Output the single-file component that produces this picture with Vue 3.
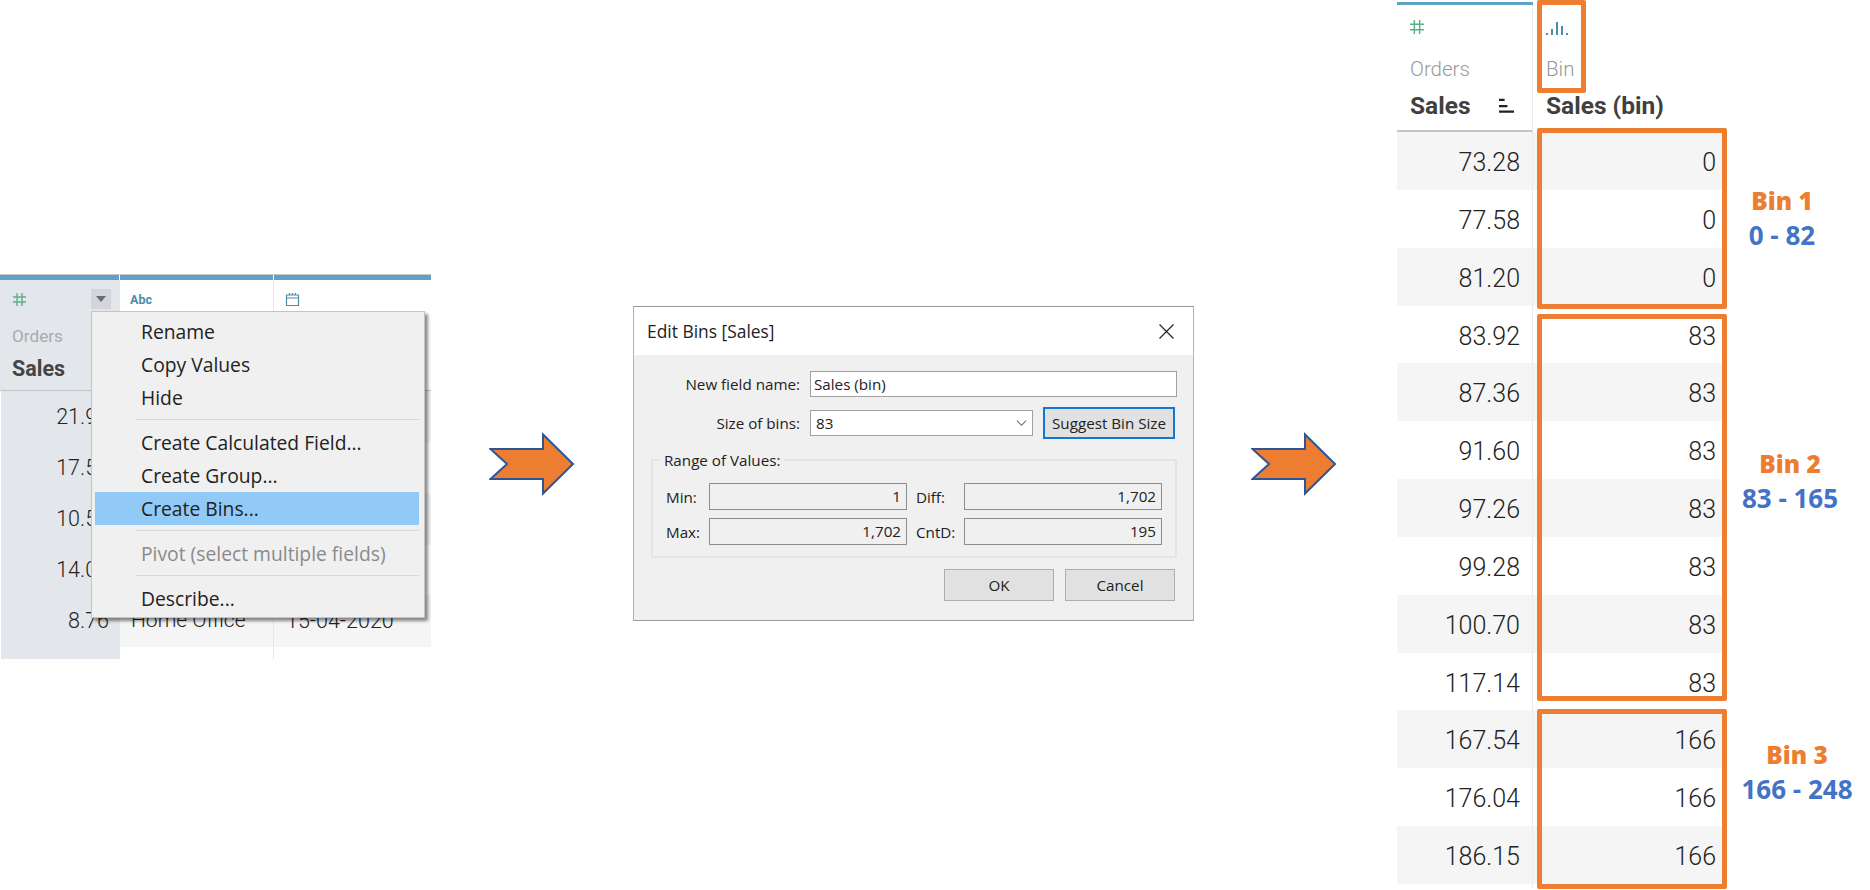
<template>
  <div class="page">
    <!-- step 1: field menu over the data grid -->
    <section class="left">
      <div class="lt-bar">
        <i></i><i></i><i></i>
      </div>
      <div class="lt-head">
        <div class="lt-h lt-h1">
          <div class="lt-icons">
            <svg class="hash" viewBox="0 0 15 15"><path d="M5 1v13M10 1v13M1 5h13M1 10h13" /></svg>
            <span class="drop"><b></b></span>
          </div>
          <div class="src">Orders</div>
          <div class="name">Sales</div>
        </div>
        <div class="lt-h">
          <div class="lt-icons"><span class="abc">Abc</span></div>
        </div>
        <div class="lt-h lt-h3">
          <div class="lt-icons">
            <svg class="cal" viewBox="0 0 15 15"><path d="M1.5 3h12v10.5h-12zM1.5 6h12M4.5 1v2.5M7.5 1v2.5M10.5 1v2.5" /></svg>
          </div>
        </div>
      </div>
      <div v-for="(row, i) in leftRows" :key="i" class="lt-row" :class="{ odd: i % 2 === 0 }">
        <div class="lt-c1">{{ row.sales }}</div>
        <div class="lt-c2">{{ row.segment }}</div>
        <div class="lt-c3">{{ row.date }}</div>
      </div>
      <div class="lt-row lt-tail">
        <div class="lt-c1"></div>
        <div class="lt-c2"></div>
        <div class="lt-c3"></div>
      </div>

      <div class="menu">
        <template v-for="(item, i) in menuItems" :key="i">
          <div v-if="item.sep" class="menu-sep"></div>
          <div v-else class="menu-item" :class="{ active: item.active, off: item.off }">{{ item.text }}</div>
        </template>
      </div>
    </section>

    <svg class="arrow arrow1" viewBox="0 0 86 64">
      <path d="M1.5 17H54V2.5L84 32 54 61.5V47H1.5L18 32z" />
    </svg>

    <!-- step 2: edit bins dialog -->
    <section class="dialog">
      <div class="dlg-title">
        <span>Edit Bins [Sales]</span>
        <svg class="close" viewBox="0 0 14 14"><path d="M0.5 0.5l13 13M13.5 0.5l-13 13" /></svg>
      </div>
      <div class="dlg-body">
        <div class="f-row">
          <label>New field name:</label>
          <div class="inp name-inp">Sales (bin)</div>
        </div>
        <div class="f-row f-row2">
          <label>Size of bins:</label>
          <div class="inp size-inp">
            <span>83</span>
            <svg viewBox="0 0 12 8"><path d="M1 1.5l5 5 5-5" /></svg>
          </div>
          <div class="suggest">Suggest Bin Size</div>
        </div>
        <div class="range">
          <span class="legend">Range of Values:</span>
          <div class="range-grid">
            <label>Min:</label><div class="ro">1</div>
            <label class="lab2">Diff:</label><div class="ro">1,702</div>
            <label>Max:</label><div class="ro">1,702</div>
            <label class="lab2">CntD:</label><div class="ro">195</div>
          </div>
        </div>
        <div class="btns">
          <div class="btn">OK</div>
          <div class="btn">Cancel</div>
        </div>
      </div>
    </section>

    <svg class="arrow arrow2" viewBox="0 0 86 64">
      <path d="M1.5 17H54V2.5L84 32 54 61.5V47H1.5L18 32z" />
    </svg>

    <!-- step 3: result table with the bins marked -->
    <section class="right">
      <div class="rt-bar"></div>
      <div class="rt-head">
        <div class="rh rh1">
          <svg class="hash rt-hash" viewBox="0 0 15 15"><path d="M5 1v13M10 1v13M1 5h13M1 10h13" /></svg>
          <div class="rt-src">Orders</div>
          <div class="rt-name">
            <span>Sales</span>
            <svg class="sort" viewBox="0 0 16 16"><path d="M0 1.5h6M0 8h9M0 14h16" /></svg>
          </div>
        </div>
        <div class="rh rh2">
          <svg class="hist" viewBox="0 0 22 15"><path d="M1 13v2M6 9v6M11 2v13M16 6v9M21 13v2" /></svg>
          <div class="rt-src">Bin</div>
          <div class="rt-name"><span>Sales (bin)</span></div>
        </div>
      </div>
      <div v-for="(row, i) in rightRows" :key="i" class="rt-row" :class="{ odd: i % 2 === 0 }">
        <div class="rt-c1">{{ row[0] }}</div>
        <div class="rt-c2">{{ row[1] }}</div>
      </div>

      <div class="mark mark-head"></div>
      <div class="mark mark-1"></div>
      <div class="mark mark-2"></div>
      <div class="mark mark-3"></div>

      <div class="bin bin-1"><b>Bin 1</b><em>0 - 82</em></div>
      <div class="bin bin-2"><b>Bin 2</b><em>83 - 165</em></div>
      <div class="bin bin-3"><b>Bin 3</b><em>166 - 248</em></div>
    </section>
  </div>
</template>

<script setup>
const leftRows = [
  { sales: '21.92', segment: '', date: '' },
  { sales: '17.52', segment: '', date: '' },
  { sales: '10.56', segment: '', date: '' },
  { sales: '14.02', segment: '', date: '' },
  { sales: '8.76', segment: 'Home Office', date: '15-04-2020' },
]

const menuItems = [
  { text: 'Rename' },
  { text: 'Copy Values' },
  { text: 'Hide' },
  { sep: true },
  { text: 'Create Calculated Field...' },
  { text: 'Create Group...' },
  { text: 'Create Bins...', active: true },
  { sep: true },
  { text: 'Pivot (select multiple fields)', off: true },
  { sep: true },
  { text: 'Describe...' },
]

const rightRows = [
  ['73.28', 0],
  ['77.58', 0],
  ['81.20', 0],
  ['83.92', 83],
  ['87.36', 83],
  ['91.60', 83],
  ['97.26', 83],
  ['99.28', 83],
  ['100.70', 83],
  ['117.14', 83],
  ['167.54', 166],
  ['176.04', 166],
  ['186.15', 166],
]
</script>

<style>
html,
body {
  margin: 0;
  background: #fff;
}
</style>

<style scoped>
.page {
  display: flex;
  align-items: flex-start;
  width: 1870px;
  height: 890px;
  overflow: hidden;
  background: #fff;
  font-family: Roboto, sans-serif;
  color: #333;
}

/* ---- left grid ---- */
.left {
  position: relative;
  flex: none;
  width: 431px;
  margin-top: 274px;
}
.lt-bar {
  display: grid;
  grid-template-columns: 119px 153px 157px;
  column-gap: 1px;
  height: 5px;
  border-top: 1px solid #c8c8c8;
}
.lt-bar i {
  background: #5fa2c5;
}
.lt-head {
  display: grid;
  grid-template-columns: 120px 154px 157px;
  height: 110px;
  border-bottom: 1px solid #c4c4c4;
  box-sizing: content-box;
}
.lt-h {
  border-right: 1px solid #e6e6e6;
  box-sizing: border-box;
}
.lt-h3 {
  border-right: 0;
}
.lt-h1 {
  background: #e3e7eb;
  padding-left: 12px;
  border-right: 0;
}
.lt-icons {
  display: flex;
  align-items: center;
  justify-content: space-between;
  height: 30px;
  margin-top: 4px;
  padding-right: 9px;
}
.hash {
  width: 15px;
  height: 15px;
  fill: none;
  stroke: #5bb08c;
  stroke-width: 1.4;
}
.drop {
  display: flex;
  align-items: center;
  justify-content: center;
  width: 20px;
  height: 20px;
  background: #d3d5d8;
}
.drop b {
  width: 0;
  height: 0;
  border-left: 5px solid transparent;
  border-right: 5px solid transparent;
  border-top: 6px solid #5f6e80;
}
.abc {
  margin-left: 10px;
  font-size: 12.5px;
  font-weight: 700;
  color: #4a8cab;
}
.cal {
  width: 15px;
  height: 15px;
  margin-left: 11px;
  fill: none;
  stroke: #4a8cab;
  stroke-width: 1.2;
}
.src {
  margin-top: 12px;
  font-size: 17.2px;
  line-height: 20px;
  color: #aaa;
}
.name {
  margin-top: 11px;
  font-size: 21.5px;
  line-height: 24px;
  font-weight: 700;
  color: #444;
}
.lt-row {
  display: grid;
  grid-template-columns: 120px 154px 157px;
  height: 51px;
  box-sizing: border-box;
  font-size: 21.5px;
  font-weight: 300;
  line-height: 51px;
  color: #222;
}
.lt-c1 {
  background: #e3e7eb;
  border-left: 1px solid #fff;
  border-bottom: 1px solid #eef0f2;
  padding-right: 11px;
  text-align: right;
}
.lt-c2 {
  padding-left: 11px;
  font-size: 21px;
  border-right: 1px solid #e6e6e6;
}
.lt-c3 {
  padding-left: 12px;
}
.lt-row.odd .lt-c2,
.lt-row.odd .lt-c3 {
  background: #f5f5f5;
}
.lt-tail {
  height: 13px;
}
.lt-tail .lt-c1 {
  border-bottom: 0;
}

.menu {
  position: absolute;
  left: 91px;
  top: 37px;
  width: 334px;
  height: 307px;
  box-sizing: border-box;
  padding: 3px 5px 4px 3px;
  background: #f0f0f0;
  border: 1px solid #c4c4c4;
  box-shadow: 3px 3px 3px rgba(0, 0, 0, 0.45);
  font-family: 'Open Sans', sans-serif;
  font-size: 19.3px;
  color: #222;
}
.menu-item {
  height: 33px;
  line-height: 33px;
  padding-left: 46px;
  white-space: nowrap;
}
.menu-item.active {
  background: #91c9f7;
}
.menu-item.off {
  color: #8a8a8a;
}
.menu-sep {
  height: 1px;
  margin: 5px 0 6px 41px;
  background: #d8d8d8;
}

.arrow {
  flex: none;
  width: 86px;
  height: 64px;
  margin-top: 432px;
}
.arrow path {
  fill: #ed7d31;
  stroke: #2f5597;
  stroke-width: 2;
}
.arrow1 {
  margin-left: 58px;
}
.arrow2 {
  margin-left: 57px;
}

/* ---- dialog ---- */
.dialog {
  flex: none;
  width: 561px;
  height: 315px;
  margin-top: 306px;
  margin-left: 58px;
  box-sizing: border-box;
  background: #f0f0f0;
  border: 1px solid #b4b4b4;
  border-top-color: #9a9a9a;
  border-bottom-color: #9a9a9a;
  font-family: 'Open Sans', sans-serif;
  font-size: 15.2px;
  color: #222;
}
.dlg-title {
  display: flex;
  align-items: center;
  justify-content: space-between;
  height: 48px;
  padding: 0 19px 0 13px;
  background: #fff;
  font-size: 17.4px;
}
.close {
  width: 15px;
  height: 15px;
  fill: none;
  stroke: #222;
  stroke-width: 1.1;
}
.dlg-body {
  padding-top: 16px;
}
.f-row {
  display: flex;
  align-items: center;
  height: 26px;
}
.f-row label {
  width: 166px;
  margin-right: 10px;
  text-align: right;
}
.f-row2 {
  margin-top: 13px;
}
.inp {
  box-sizing: border-box;
  height: 26px;
  line-height: 24px;
  padding-left: 3px;
  background: #fff;
  border: 1px solid #a0a0a0;
}
.name-inp {
  width: 367px;
}
.size-inp {
  display: flex;
  align-items: center;
  justify-content: space-between;
  width: 223px;
  padding: 0 5px 0 5px;
}
.size-inp svg {
  width: 11px;
  height: 8px;
  fill: none;
  stroke: #666;
  stroke-width: 1.1;
}
.suggest {
  box-sizing: border-box;
  width: 132px;
  height: 32px;
  margin-left: 10px;
  line-height: 28px;
  text-align: center;
  background: #e1e1e1;
  border: 2px solid #0f78d4;
  white-space: nowrap;
}
.range {
  position: relative;
  box-sizing: border-box;
  width: 526px;
  height: 99px;
  margin: 23px 0 0 17px;
  padding: 22px 0 0 13px;
  border: 2px solid #e4e4e4;
}
.legend {
  position: absolute;
  left: 7px;
  top: -10px;
  padding: 0 4px;
  line-height: 18px;
  background: #f0f0f0;
}
.range-grid {
  display: grid;
  grid-template-columns: 43px 198px 57px 198px;
  grid-auto-rows: 27px;
  row-gap: 8px;
  align-items: center;
}
.lab2 {
  padding-left: 9px;
}
.ro {
  box-sizing: border-box;
  height: 27px;
  line-height: 25px;
  padding-right: 5px;
  text-align: right;
  border: 1px solid #8e8e8e;
}
.btns {
  display: flex;
  justify-content: flex-end;
  gap: 11px;
  margin-top: 11px;
  padding-right: 18px;
}
.btn {
  box-sizing: border-box;
  width: 110px;
  height: 32px;
  line-height: 30px;
  text-align: center;
  background: #e1e1e1;
  border: 1px solid #adadad;
}

/* ---- right table ---- */
.right {
  position: relative;
  flex: none;
  width: 473px;
  height: 890px;
  margin-left: 60px;
}
.rt-bar {
  width: 136px;
  height: 3px;
  margin-top: 2px;
  background: #5fa2c5;
}
.rt-head {
  display: grid;
  grid-template-columns: 136px 191px;
  width: 327px;
  height: 127px;
}
.rh {
  box-sizing: border-box;
  padding-left: 13px;
}
.rh1 {
  border-right: 1px solid #ececec;
  border-bottom: 2px solid #c4c4c4;
}
.rt-hash {
  display: block;
  width: 16px;
  height: 16px;
  margin: 14px 0 0 -1px;
}
.rh2 {
  padding-left: 13px;
}
.hist {
  display: block;
  width: 22px;
  height: 15px;
  margin: 15px 0 0 0;
  fill: none;
  stroke: #4a8cab;
  stroke-width: 2;
}
.rt-src {
  margin-top: 22px;
  font-size: 20.5px;
  font-weight: 300;
  line-height: 24px;
  color: #999;
}
.rt-name {
  display: flex;
  align-items: center;
  justify-content: space-between;
  margin-top: 11px;
  padding-right: 18px;
  font-size: 24.5px;
  line-height: 28px;
  font-weight: 700;
  color: #404040;
}
.sort {
  width: 15px;
  height: 16px;
  fill: none;
  stroke: #222;
  stroke-width: 2.4;
}
.rt-row {
  display: grid;
  grid-template-columns: 136px 191px;
  width: 327px;
  height: 57.85px;
  font-size: 25px;
  font-weight: 300;
  line-height: 62px;
  text-align: right;
  color: #222;
}
.rt-row.odd {
  background: #f5f5f5;
}
.rt-c1 {
  padding-right: 12px;
  border-right: 1px solid #ececec;
}
.rt-c2 {
  padding-right: 8px;
}

.mark {
  position: absolute;
  left: 140px;
  box-sizing: border-box;
  width: 190px;
  border: 5px solid #ed7d31;
  border-radius: 2px;
}
.mark-head {
  top: 0;
  width: 49px;
  height: 93px;
}
.mark-1 {
  top: 128px;
  height: 181px;
}
.mark-2 {
  top: 314px;
  height: 387px;
}
.mark-3 {
  top: 709px;
  height: 180px;
}

.bin {
  position: absolute;
  display: flex;
  flex-direction: column;
  align-items: center;
  width: 120px;
  font-family: 'Open Sans', sans-serif;
  font-size: 24.5px;
  line-height: 35px;
  font-weight: 700;
  white-space: nowrap;
}
.bin b {
  color: #ed7d31;
}
.bin em {
  font-style: normal;
  font-size: 26px;
  color: #4472c4;
}
.bin-1 {
  left: 325px;
  top: 183px;
}
.bin-2 {
  left: 333px;
  top: 446px;
}
.bin-3 {
  left: 340px;
  top: 737px;
}
</style>
